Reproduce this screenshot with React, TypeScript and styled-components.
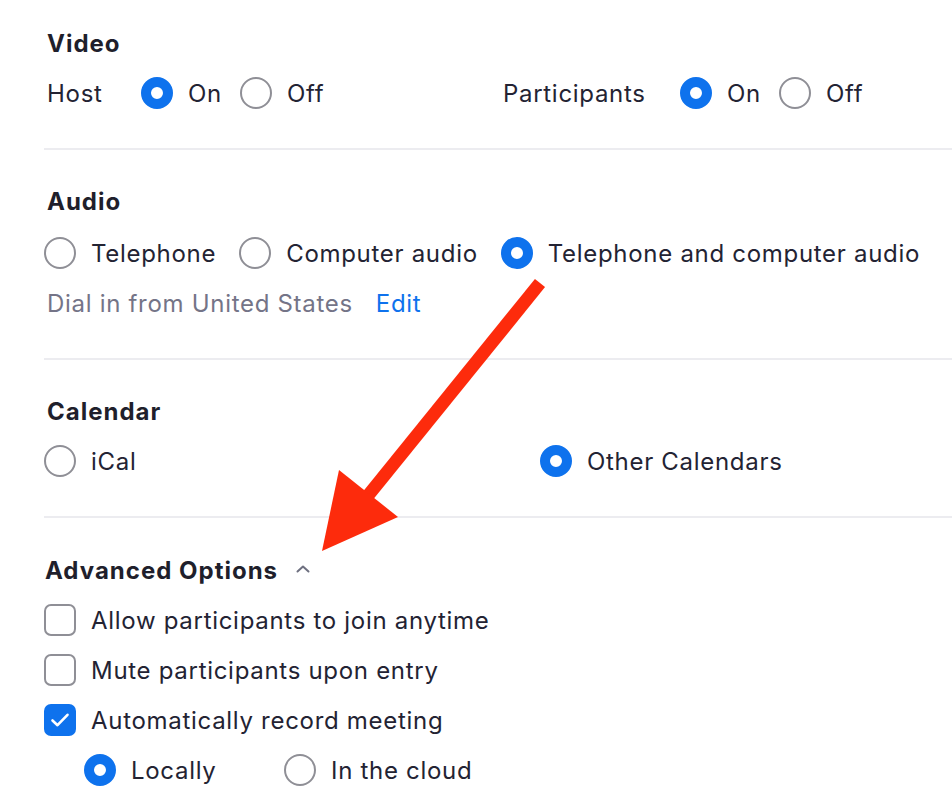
import React from 'react';
import styled, { createGlobalStyle } from 'styled-components';

const BLUE = '#0e72ed';
const TEXT = '#232333';
const MUTED = '#747487';
const LINE = '#ececf0';

const GlobalStyle = createGlobalStyle`
  html, body {
    margin: 0;
    padding: 0;
    background: #fff;
  }
  body {
    font-family: Inter, "Noto Sans", "Liberation Sans", sans-serif;
    color: ${TEXT};
    -webkit-font-smoothing: antialiased;
  }
`;

const Page = styled.div`
  position: relative;
  width: 952px;
  height: 802px;
  overflow: hidden;
  padding-top: 18px;
  box-sizing: border-box;
`;

const Section = styled.section<{ $top?: number }>`
  margin-left: 44px;
  padding-top: ${({ $top }) => $top ?? 26}px;
  padding-bottom: 30px;
  border-bottom: 2px solid ${LINE};

  &:last-of-type {
    border-bottom: none;
  }
`;

const Heading = styled.div<{ $indent?: number; $after?: number }>`
  display: flex;
  align-items: center;
  height: 50px;
  margin-bottom: ${({ $after }) => $after ?? 0}px;
  padding-left: ${({ $indent }) => $indent ?? 3}px;
  font-size: 24px;
  font-weight: 700;
  letter-spacing: 1px;
  color: #1f1f2c;
`;

const Row = styled.div<{ $gap?: number; $indent?: number }>`
  display: flex;
  align-items: center;
  height: 50px;
  gap: ${({ $gap }) => $gap ?? 0}px;
  padding-left: ${({ $indent }) => $indent ?? 0}px;
  font-size: 24px;
  letter-spacing: 0.7px;
`;

const Split = styled.div<{ $col: number }>`
  display: grid;
  grid-template-columns: ${({ $col }) => $col}px 1fr;
  align-items: center;
  height: 50px;
  font-size: 24px;
  letter-spacing: 0.7px;
`;

const Group = styled.div<{ $gap?: number }>`
  display: flex;
  align-items: center;
  gap: ${({ $gap }) => $gap ?? 18}px;
`;

const Label = styled.span<{ $width: number }>`
  display: inline-block;
  width: ${({ $width }) => $width}px;
  padding-left: 3px;
  box-sizing: border-box;
`;

const Option = styled.label<{ $width?: number }>`
  display: flex;
  align-items: center;
  gap: 15px;
  width: ${({ $width }) => ($width ? `${$width}px` : 'auto')};
  white-space: nowrap;
`;

const Radio = styled.span<{ $on?: boolean }>`
  flex: none;
  width: 32px;
  height: 32px;
  border-radius: 50%;
  box-sizing: border-box;
  background: #fff;
  border: ${({ $on }) => ($on ? `10px solid ${BLUE}` : '2px solid #8f8f96')};
`;

const Box = styled.span<{ $on?: boolean }>`
  flex: none;
  display: flex;
  align-items: center;
  justify-content: center;
  width: 32px;
  height: 32px;
  border-radius: 7px;
  box-sizing: border-box;
  background: ${({ $on }) => ($on ? BLUE : '#fff')};
  border: ${({ $on }) => ($on ? 'none' : '2px solid #8f8f96')};
`;

const Muted = styled.span`
  color: ${MUTED};
  padding-left: 3px;
`;

const Link = styled.a`
  color: ${BLUE};
  text-decoration: none;
`;

const Chevron = styled.svg`
  margin-left: 18px;
  margin-top: -2px;
`;

const Overlay = styled.svg`
  position: absolute;
  left: 0;
  top: 0;
  pointer-events: none;
`;

const Check = () => (
  <svg width="20" height="16" viewBox="0 0 20 16">
    <path d="M2.5 8.5 L7.5 13.2 L17.5 2.8" fill="none" stroke="#fff" strokeWidth="2.6" strokeLinecap="round" strokeLinejoin="round" />
  </svg>
);

const Choice = ({ on, children, width }: { on?: boolean; children: React.ReactNode; width?: number }) => (
  <Option $width={width}>
    <Radio $on={on} />
    <span>{children}</span>
  </Option>
);

const CheckRow = ({ on, children }: { on?: boolean; children: React.ReactNode }) => (
  <Row>
    <Option>
      <Box $on={on}>{on && <Check />}</Box>
      <span>{children}</span>
    </Option>
  </Row>
);

export default function App() {
  return (
    <Page>
      <GlobalStyle />

      <Section $top={0}>
        <Heading>Video</Heading>
        <Split $col={456}>
          <Group>
            <Label $width={79}>Host</Label>
            <Choice on>On</Choice>
            <Choice>Off</Choice>
          </Group>
          <Group>
            <Label $width={162}>Participants</Label>
            <Choice on>On</Choice>
            <Choice>Off</Choice>
          </Group>
        </Split>
      </Section>

      <Section>
        <Heading $after={2}>Audio</Heading>
        <Row $gap={23}>
          <Choice>Telephone</Choice>
          <Choice>Computer audio</Choice>
          <Choice on>Telephone and computer audio</Choice>
        </Row>
        <Row $gap={23}>
          <Muted>Dial in from United States</Muted>
          <Link href="#">Edit</Link>
        </Row>
      </Section>

      <Section $top={26}>
        <Heading>Calendar</Heading>
        <Split $col={496}>
          <Choice>iCal</Choice>
          <Choice on>Other Calendars</Choice>
        </Split>
      </Section>

      <Section $top={27}>
        <Heading $indent={1}>
          Advanced Options
          <Chevron width="14" height="8" viewBox="0 0 14 8">
            <polyline points="1.5,6.5 7,1.5 12.5,6.5" fill="none" stroke="#6e7080" strokeWidth="2" strokeLinecap="round" strokeLinejoin="round" />
          </Chevron>
        </Heading>
        <CheckRow>Allow participants to join anytime</CheckRow>
        <CheckRow>Mute participants upon entry</CheckRow>
        <CheckRow on>Automatically record meeting</CheckRow>
        <Row $indent={40}>
          <Choice on width={200}>Locally</Choice>
          <Choice>In the cloud</Choice>
        </Row>
      </Section>

      <Overlay width="952" height="802" viewBox="0 0 952 802">
        <line x1="540" y1="283" x2="362" y2="503" stroke="#fd2b0c" strokeWidth="13" />
        <polygon points="322,551 339,470 398,517" fill="#fd2b0c" />
      </Overlay>
    </Page>
  );
}
